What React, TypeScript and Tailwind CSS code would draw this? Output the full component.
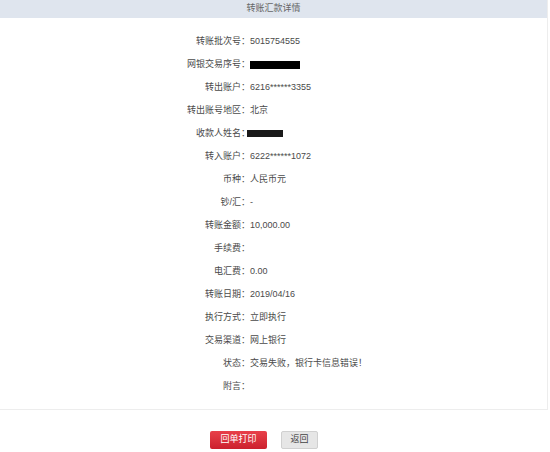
const rows: { label: string; value?: string; mask?: "long" | "short" }[] = [
  { label: "转账批次号", value: "5015754555" },
  { label: "网银交易序号", mask: "long" },
  { label: "转出账户", value: "6216******3355" },
  { label: "转出账号地区", value: "北京" },
  { label: "收款人姓名", mask: "short" },
  { label: "转入账户", value: "6222******1072" },
  { label: "币种", value: "人民币元" },
  { label: "钞/汇", value: "-" },
  { label: "转账金额", value: "10,000.00" },
  { label: "手续费", value: "" },
  { label: "电汇费", value: "0.00" },
  { label: "转账日期", value: "2019/04/16" },
  { label: "执行方式", value: "立即执行" },
  { label: "交易渠道", value: "网上银行" },
  { label: "状态", value: "交易失败，银行卡信息错误！" },
  { label: "附言", value: "" },
]

export default function App() {
  return (
    <div
      className="h-[452px] w-[550px] bg-white text-[9px] text-[#4a4a4a]"
      style={{ fontFamily: '"Liberation Sans", "Noto Sans CJK SC", sans-serif' }}
    >
      <div className="w-[548px] border-r border-b border-[#ededed]">
        <div className="flex h-[18px] items-center justify-center bg-[#dfe5ee] text-[#666]">
          转账汇款详情
        </div>
        <div className="pt-[12px] pb-[11px]">
          {rows.map((r) => (
            <div key={r.label} className="flex h-[23px] items-center">
              <div className="w-[250px] text-right">{r.label}：</div>
              <div className="flex items-center">
                {r.mask === "long" && <span className="block h-[8px] w-[50px] bg-black" />}
                {r.mask === "short" && (
                  <span className="-ml-[3px] block h-[7px] w-[36px] bg-[#1a1a1a]" />
                )}
                {r.value}
              </div>
            </div>
          ))}
        </div>
      </div>
      <div className="mt-[21px] flex justify-center gap-[14px] pr-[22px]">
        <button className="h-[18px] w-[57px] rounded-[2px] bg-gradient-to-b from-[#e8404a] to-[#cc1f2d] text-[9px] text-white">
          回单打印
        </button>
        <button className="h-[18px] w-[37px] rounded-[2px] border border-[#d0d0d0] bg-[#e6e6e6] text-[9px] text-[#444]">
          返回
        </button>
      </div>
    </div>
  )
}
